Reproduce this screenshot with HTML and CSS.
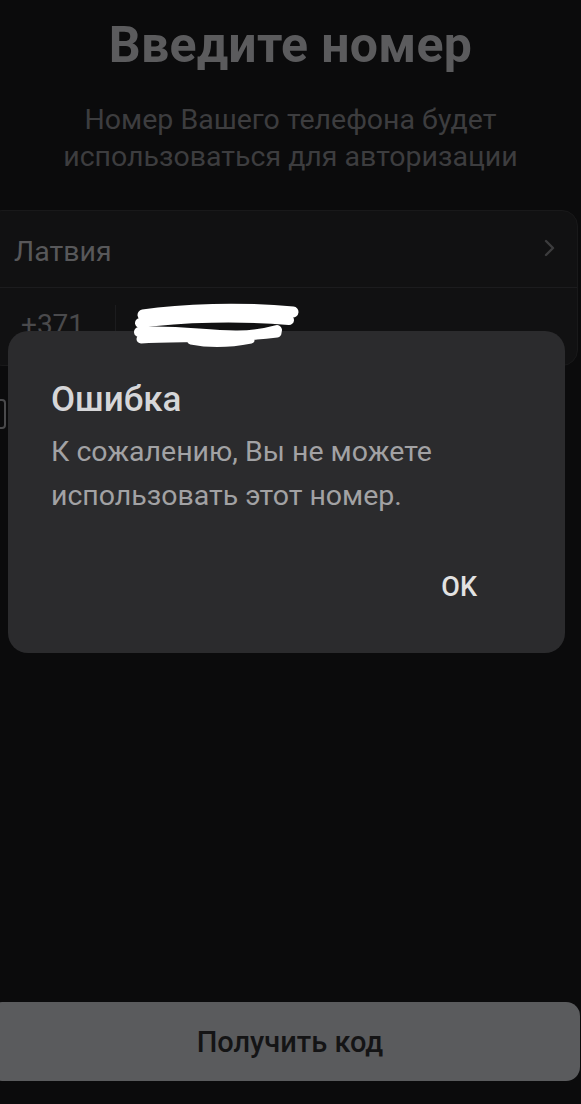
FILE: index.html
```html
<!DOCTYPE html>
<html lang="ru">
<head>
<meta charset="utf-8">
<link rel="stylesheet" href="styles.css">
</head>
<body>
<div class="screen">
  <main class="page">
    <h1 class="title">Введите номер</h1>
    <p class="subtitle">Номер Вашего телефона будет<br>использоваться для авторизации</p>
    <section class="card">
      <div class="row country">
        <span class="country-name">Латвия</span>
        <svg class="chevron" width="14" height="20" viewBox="0 0 14 20"><path d="M3 3l7 7-7 7" fill="none" stroke="#3c3c3e" stroke-width="2.4" stroke-linecap="round" stroke-linejoin="round"/></svg>
      </div>
      <div class="row phone">
        <span class="code">+371</span>
        <span class="sep"></span>
        <svg class="scribble" width="172" height="48" viewBox="0 0 172 48">
          <path d="M12 12 C50 6 110 4 162 9" stroke="#fff" stroke-width="11" fill="none" stroke-linecap="round"/>
          <path d="M9 20 C50 14 110 13 158 17" stroke="#fff" stroke-width="10" fill="none" stroke-linecap="round"/>
          <path d="M8 29 C60 25 100 40 146 27" stroke="#fff" stroke-width="10" fill="none" stroke-linecap="round"/>
          <path d="M10 36 C50 34 95 36 146 30" stroke="#fff" stroke-width="9" fill="none" stroke-linecap="round"/>
          <path d="M60 38 C80 42 100 41 120 37" stroke="#fff" stroke-width="7" fill="none" stroke-linecap="round"/>
        </svg>
      </div>
    </section>
    <div class="check-row"><span class="checkbox"></span></div>
    <div class="spacer"></div>
    <button class="primary">Получить код</button>
  </main>
  <div class="dialog" role="alertdialog">
    <h2 class="dialog-title">Ошибка</h2>
    <p class="dialog-text">К сожалению, Вы не можете<br>использовать этот номер.</p>
    <div class="dialog-actions"><span class="ok">OK</span></div>
  </div>
</div>
</body>
</html>
```
FILE: styles.css
```css
html, body {
  margin: 0;
  padding: 0;
  background: #0b0b0c;
}
body {
  font-family: Roboto, "Noto Sans", "Liberation Sans", sans-serif;
}
.screen {
  position: relative;
  width: 581px;
  height: 1104px;
  overflow: hidden;
  background: #0b0b0c;
}
.page {
  display: flex;
  flex-direction: column;
  height: 1104px;
}
.title {
  margin: 18px 0 0;
  text-align: center;
  font-size: 50px;
  line-height: 54px;
  font-weight: 700;
  color: #5b5b5d;
  letter-spacing: 0.3px;
}
.subtitle {
  margin: 29px 0 0;
  text-align: center;
  font-size: 28.5px;
  line-height: 37px;
  color: #3d3d3f;
}
.card {
  margin: 35px 3px 0 -14px;
  background: #111112;
  border: 1px solid #19191a;
  border-radius: 16px;
  display: flex;
  flex-direction: column;
}
.row {
  display: flex;
  align-items: center;
  height: 77px;
}
.country {
  padding: 4px 20px 0 27px;
  box-sizing: border-box;
  justify-content: space-between;
  border-bottom: 1px solid #1c1c1e;
}
.country-name {
  font-size: 28.5px;
  color: #58585a;
}
.chevron {
  margin-top: -6px;
}
.phone {
  padding-left: 34px;
}
.code {
  font-size: 28px;
  color: #4a4a4c;
  margin-top: -4px;
}
.sep {
  width: 1px;
  height: 60px;
  background: #1c1c1e;
  margin: 0 15px 0 31px;
  align-self: flex-end;
}
.scribble {
  position: relative;
  z-index: 2;
}
.check-row {
  height: 40px;
  margin-top: 33px;
  display: flex;
}
.checkbox {
  width: 30px;
  height: 30px;
  margin-left: -24px;
  border: 2px solid #4a4a4c;
  border-radius: 4px;
  box-sizing: border-box;
}
.spacer {
  flex: 1;
}
.primary {
  margin: 0 1px 23px -12px;
  height: 79px;
  border: none;
  border-radius: 14px;
  background: #5a5b5d;
  color: #141415;
  font-family: Roboto, "Noto Sans", sans-serif;
  font-size: 29px;
  font-weight: 500;
  padding: 0 0 0 12px;
}
.dialog {
  position: absolute;
  z-index: 1;
  left: 8px;
  top: 331px;
  width: 557px;
  height: 322px;
  box-sizing: border-box;
  background: #2b2b2d;
  border-radius: 20px;
  padding: 47px 43px 0;
}
.dialog-title {
  margin: 0;
  font-size: 35px;
  line-height: 44px;
  font-weight: 500;
  color: #d6d6d8;
}
.dialog-text {
  margin: 8px 0 0;
  font-size: 28.5px;
  line-height: 44px;
  color: #a2a2a4;
}
.dialog-actions {
  display: flex;
  justify-content: flex-end;
  margin-top: 51px;
  padding-right: 45px;
}
.ok {
  font-size: 27px;
  font-weight: 500;
  color: #e2e2e2;
  line-height: 36px;
}
```
